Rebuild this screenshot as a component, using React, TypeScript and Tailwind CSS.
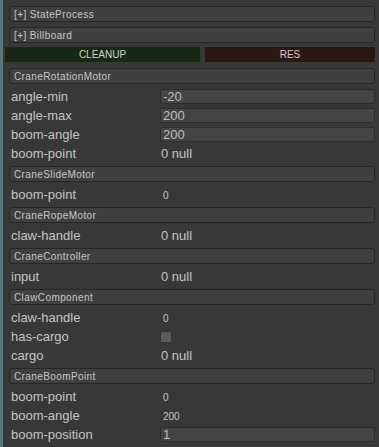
const font = { fontFamily: '"Liberation Sans", Arial, sans-serif' };

type Row =
  | { label: string; kind: "field"; value: string }
  | { label: string; kind: "text"; value: string; small?: boolean }
  | { label: string; kind: "check" };

const sections: { title: string; rows: Row[] }[] = [
  {
    title: "CraneRotationMotor",
    rows: [
      { label: "angle-min", kind: "field", value: "-20" },
      { label: "angle-max", kind: "field", value: "200" },
      { label: "boom-angle", kind: "field", value: "200" },
      { label: "boom-point", kind: "text", value: "0 null" },
    ],
  },
  {
    title: "CraneSlideMotor",
    rows: [{ label: "boom-point", kind: "text", value: "0", small: true }],
  },
  {
    title: "CraneRopeMotor",
    rows: [{ label: "claw-handle", kind: "text", value: "0 null" }],
  },
  {
    title: "CraneController",
    rows: [{ label: "input", kind: "text", value: "0 null" }],
  },
  {
    title: "ClawComponent",
    rows: [
      { label: "claw-handle", kind: "text", value: "0", small: true },
      { label: "has-cargo", kind: "check" },
      { label: "cargo", kind: "text", value: "0 null" },
    ],
  },
  {
    title: "CraneBoomPoint",
    rows: [
      { label: "boom-point", kind: "text", value: "0", small: true },
      { label: "boom-angle", kind: "text", value: "200", small: true },
      { label: "boom-position", kind: "field", value: "1" },
    ],
  },
];

const HeaderBox = ({ text }: { text: string }) => (
  <div className="ml-[9px] mr-[4px] h-[16px] rounded-[3px] border border-[#262626] bg-[#3f3f3f] pl-[4px] text-[10px] leading-[15px] tracking-[0.4px] text-[#c6c6c6]">
    {text}
  </div>
);

const PropRow = ({ row }: { row: Row }) => (
  <div className="flex h-[19px] items-center">
    <div className="w-[160px] pl-[11px] pt-[1px] text-[13px] text-[#c4c4c4]">{row.label}</div>
    <div className="flex-1 pr-[4px]">
      {row.kind === "field" && (
        <div className="h-[15px] rounded-[2px] border border-[#2c2c2c] bg-[#444444] pl-[2px] text-[13px] leading-[14px] text-[#bdbdbd]">
          {row.value}
        </div>
      )}
      {row.kind === "text" && (
        <div
          className={
            row.small
              ? "pl-[3px] pt-[1px] text-[10px] text-[#c4c4c4]"
              : "pl-[1px] pt-[1px] text-[13px] text-[#c4c4c4]"
          }
        >
          {row.value}
        </div>
      )}
      {row.kind === "check" && (
        <div className="mt-[1px] h-[12px] w-[12px] rounded-[2px] border border-[#333333] bg-[#5c5c5c]" />
      )}
    </div>
  </div>
);

export default function App() {
  return (
    <div className="flex h-[447px] w-[379px] overflow-hidden bg-[#383838]" style={font}>
      <div className="w-[3px] shrink-0 bg-[#56777c]" />
      <div className="flex-1 -ml-[3px] pt-[6px]">
        <HeaderBox text="[+] StateProcess" />
        <div className="mt-[5px]">
          <HeaderBox text="[+] Billboard" />
        </div>
        <div className="mt-[4px] flex gap-[5px] pl-[5px] pr-[4px]">
          <div className="flex h-[15px] w-[195px] items-center justify-center bg-[#172916] text-[10px] text-[#c9d6c9]">
            CLEANUP
          </div>
          <div className="flex h-[15px] flex-1 items-center justify-center bg-[#2c1717] text-[10px] text-[#d6c9c9]">
            RES
          </div>
        </div>
        <div className="mt-[3px]">
          {sections.map((s) => (
            <div key={s.title}>
              <div className="py-[3px]">
                <HeaderBox text={s.title} />
              </div>
              {s.rows.map((r, i) => (
                <PropRow key={i} row={r} />
              ))}
            </div>
          ))}
        </div>
      </div>
    </div>
  );
}
